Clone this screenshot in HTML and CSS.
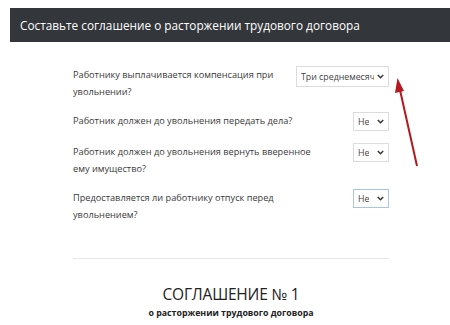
FILE: index.html
```html
<!DOCTYPE html>
<html lang="ru">
<head>
<meta charset="utf-8">
<link rel="stylesheet" href="styles.css">
</head>
<body>
<div class="header">Составьте соглашение о расторжении трудового договора</div>
<div class="content">
  <div class="row">
    <div class="label">Работнику выплачивается компенсация при увольнении?</div>
    <div class="select wide"><span class="val">Три среднемесяч</span><svg class="chev" width="7" height="5" viewBox="0 0 7 5"><path d="M0.8 1 L3.5 3.8 L6.2 1" fill="none" stroke="#333" stroke-width="1.4"/></svg></div>
  </div>
  <div class="row">
    <div class="label">Работник должен до увольнения передать дела?</div>
    <div class="select small"><span class="val">Не</span><svg class="chev" width="7" height="5" viewBox="0 0 7 5"><path d="M0.8 1 L3.5 3.8 L6.2 1" fill="none" stroke="#333" stroke-width="1.4"/></svg></div>
  </div>
  <div class="row">
    <div class="label">Работник должен до увольнения вернуть вверенное ему имущество?</div>
    <div class="select small"><span class="val">Не</span><svg class="chev" width="7" height="5" viewBox="0 0 7 5"><path d="M0.8 1 L3.5 3.8 L6.2 1" fill="none" stroke="#333" stroke-width="1.4"/></svg></div>
  </div>
  <div class="row">
    <div class="label">Предоставляется ли работнику отпуск перед увольнением?</div>
    <div class="select small focus"><span class="val">Не</span><svg class="chev" width="7" height="5" viewBox="0 0 7 5"><path d="M0.8 1 L3.5 3.8 L6.2 1" fill="none" stroke="#333" stroke-width="1.4"/></svg></div>
  </div>
  <hr class="rule">
  <h1 class="doc-title">СОГЛАШЕНИЕ № 1</h1>
  <div class="doc-sub">о расторжении трудового договора</div>
</div>
<svg class="arrow" width="450" height="325" viewBox="0 0 450 325">
  <line x1="417" y1="166" x2="400" y2="90" stroke="#b3191e" stroke-width="2"/>
  <path d="M397.5 78 L395 93 L404 91 Z" fill="#b3191e"/>
</svg>
</body>
</html>
```
FILE: styles.css
```css
html, body {
  margin: 0;
  padding: 0;
  background: #fff;
  font-family: "Open Sans", "Noto Sans", sans-serif;
  color: #333;
}
body {
  width: 450px;
  height: 325px;
  overflow: hidden;
  position: relative;
}
.header {
  margin: 8px 0 0 10px;
  height: 34px;
  background: #33363a;
  color: #fff;
  font-size: 11.8px;
  line-height: 34px;
  padding-left: 10px;
  white-space: nowrap;
}
.content {
  margin: 24px 0 0 73px;
  width: 316px;
}
.row {
  display: flex;
  justify-content: space-between;
  align-items: flex-start;
  margin-bottom: 12px;
}
.label {
  width: 252px;
  font-size: 9.2px;
  line-height: 17px;
  color: #3a3a3a;
}
.select {
  display: flex;
  align-items: center;
  justify-content: space-between;
  box-sizing: border-box;
  border: 1px solid #dcdcdc;
  background: #fff;
  font-size: 8.8px;
  color: #444;
  padding: 0 4px 0 4px;
}
.select.wide {
  width: 93px;
  height: 21px;
}
.select.small {
  width: 36px;
  height: 19px;
}
.select.focus {
  border-color: #a9c5e2;
}
.val {
  white-space: nowrap;
  overflow: hidden;
}
.chev {
  flex: none;
  margin-left: 3px;
}
.rule {
  border: 0;
  border-top: 1px solid #e6e6e6;
  margin: 35px 0 0 0;
}
.doc-title {
  margin: 24px 0 0 0;
  text-align: center;
  font-weight: 400;
  font-size: 15.5px;
  line-height: 22px;
  color: #222;
  letter-spacing: -0.2px;
}
.doc-sub {
  margin-top: 2px;
  text-align: center;
  font-weight: 700;
  font-size: 8.8px;
  line-height: 13px;
  color: #222;
}
.arrow {
  position: absolute;
  left: 0;
  top: 0;
  pointer-events: none;
}
```
